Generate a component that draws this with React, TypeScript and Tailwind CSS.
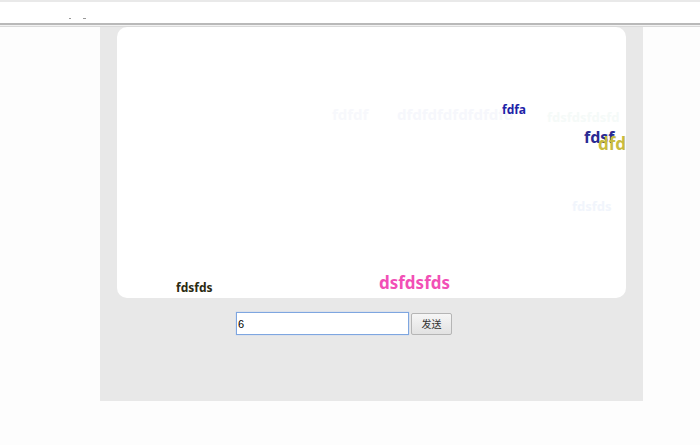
import { useState } from 'react';

type Bullet = {
  text: string;
  left: number;
  top: number;
  size: string;
  color: string;
};

const bullets: Bullet[] = [
  { text: 'fdfdf', left: 215, top: 80, size: 'text-[15px]', color: 'text-[#f7f8fc]' },
  { text: 'dfdfdfdfdfdfdfd', left: 280, top: 80, size: 'text-[15px]', color: 'text-[#f6f7fc]' },
  { text: 'fdsfdsfdsfd', left: 430, top: 84, size: 'text-[13px]', color: 'text-[#f5faf8]' },
  { text: 'fdfa', left: 385, top: 77, size: 'text-[12px]', color: 'text-[#1c22a8]' },
  { text: 'fdsf', left: 467, top: 102, size: 'text-[16px]', color: 'text-[#2a2a92]' },
  { text: 'dfd', left: 481, top: 108, size: 'text-[17px]', color: 'text-[#c9bb3e]' },
  { text: 'fdsfds', left: 455, top: 173, size: 'text-[13px]', color: 'text-[#f1f5fc]' },
  { text: 'dsfdsfds', left: 262, top: 247, size: 'text-[17px]', color: 'text-[#f24fb6]' },
  { text: 'fdsfds', left: 59, top: 255, size: 'text-[12px]', color: 'text-[#2b2b12]' },
];

const App = () => {
  const [msg, setMsg] = useState('6');

  return (
    <div className="w-[700px] h-[445px] bg-[#fdfdfd] overflow-hidden font-['Noto_Sans','Liberation_Sans',sans-serif]">
      {/* top strip */}
      <div className="h-[23px] border-t-2 border-[#e9e9e9] bg-white relative">
        <span className="absolute left-[69px] top-[16px] w-[2px] h-[1px] bg-[#999]" />
        <span className="absolute left-[83px] top-[16px] w-[3px] h-[1px] bg-[#999]" />
      </div>
      <div className="h-[2px] bg-[#b9b9b9]" />
      <div className="h-[2px] bg-[#f2f2f2] border-b border-[#d9d9d9]" />

      <div className="flex">
        <div className="ml-[100px] w-[543px] h-[374px] bg-[#e8e8e8] flex flex-col items-center">
          {/* danmaku stage */}
          <div className="relative w-[509px] h-[271px] bg-white rounded-[10px] overflow-hidden">
            {bullets.map((b, i) => (
              <span
                key={i}
                className={`absolute font-bold leading-none whitespace-nowrap ${b.size} ${b.color}`}
                style={{ left: b.left, top: b.top }}
              >
                {b.text}
              </span>
            ))}
          </div>

          <div className="self-start flex items-center gap-[2px] mt-[14px] ml-[136px]">
            <input
              value={msg}
              onChange={(e) => setMsg(e.target.value)}
              className="w-[173px] h-[23px] px-[1px] text-[11px] text-black bg-white border border-[#7ea6e0] shadow-[0_0_1px_#9ebcf0] outline-none font-['Liberation_Sans',sans-serif]"
            />
            <button className="w-[41px] h-[22px] text-[10px] text-[#333] border border-[#b5b5b5] rounded-[2px] bg-gradient-to-b from-[#f6f6f6] to-[#e2e2e2] font-['Noto_Sans_CJK_SC',sans-serif]">
              发送
            </button>
          </div>
        </div>
      </div>
    </div>
  );
};

export default App;
